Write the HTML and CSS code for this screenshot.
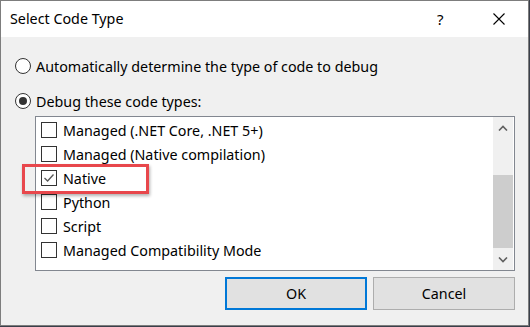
FILE: index.html
```html
<!DOCTYPE html>
<html>
<head>
<meta charset="utf-8">
<link rel="stylesheet" href="styles.css">
</head>
<body>
<div class="window">
  <div class="titlebar">
    <span class="title">Select Code Type</span>
    <span class="help">?</span>
    <span class="close">
      <svg width="12" height="12" viewBox="0 0 12 12"><path d="M0.5 0.5 L11.5 11.5 M11.5 0.5 L0.5 11.5" stroke="#000" stroke-width="1.1" fill="none"/></svg>
    </span>
  </div>
  <div class="content">
    <div class="radio-row"><span class="radio"></span><span>Automatically determine the type of code to debug</span></div>
    <div class="radio-row"><span class="radio checked"></span><span>Debug these code types:</span></div>
    <div class="listbox">
      <div class="items">
        <div class="item"><span class="cb"></span><span>Managed (.NET Core, .NET 5+)</span></div>
        <div class="item"><span class="cb"></span><span>Managed (Native compilation)</span></div>
        <div class="item"><span class="cb">
          <svg width="12" height="12" viewBox="0 0 12 12"><path d="M1.5 6 L4.6 9 L10.5 2.5" stroke="#555" stroke-width="1.3" fill="none"/></svg>
        </span><span>Native</span></div>
        <div class="item"><span class="cb"></span><span>Python</span></div>
        <div class="item"><span class="cb"></span><span>Script</span></div>
        <div class="item"><span class="cb"></span><span>Managed Compatibility Mode</span></div>
      </div>
      <div class="scrollbar">
        <div class="arrow">
          <svg width="10" height="6" viewBox="0 0 10 6"><path d="M1 5.5 L5 1.5 L9 5.5" stroke="#606060" stroke-width="1.6" fill="none"/></svg>
        </div>
        <div class="track"><div class="thumb"></div></div>
        <div class="arrow">
          <svg width="10" height="6" viewBox="0 0 10 6"><path d="M1 0.5 L5 4.5 L9 0.5" stroke="#606060" stroke-width="1.6" fill="none"/></svg>
        </div>
      </div>
    </div>
    <div class="buttons">
      <div class="btn default">OK</div>
      <div class="btn">Cancel</div>
    </div>
  </div>
  <div class="highlight"></div>
</div>
</body>
</html>
```
FILE: styles.css
```css
html, body {
  margin: 0;
  padding: 0;
  background: #3a3f4a;
}
body {
  width: 530px;
  height: 327px;
  overflow: hidden;
  font-family: "Noto Sans", "Open Sans", sans-serif;
  color: #000;
}
.window {
  position: relative;
  width: 527px;
  height: 324px;
  border: 1px solid #7d7d7d;
  background: #f0f0f0;
  display: flex;
  flex-direction: column;
}
.titlebar {
  height: 36px;
  background: #fff;
  display: flex;
  align-items: center;
  font-size: 14.3px;
}
.title {
  margin-left: 9px;
  flex: 1;
  padding-bottom: 1px;
}
.help {
  width: 12px;
  font-size: 15px;
  margin-right: 44px;
  padding-bottom: 1px;
}
.close {
  width: 12px;
  height: 12px;
  margin-right: 23px;
  display: flex;
}
.content {
  flex: 1;
  padding: 17px 13px 0 14px;
  display: flex;
  flex-direction: column;
  font-size: 14.3px;
}
.radio-row {
  height: 24px;
  display: flex;
  align-items: center;
}
.radio-row + .radio-row {
  margin-top: 11px;
}
.radio {
  width: 14px;
  height: 14px;
  border: 1px solid #333;
  border-radius: 50%;
  background: #fff;
  margin-right: 5px;
  flex: none;
  display: flex;
  align-items: center;
  justify-content: center;
}
.radio.checked::after {
  content: "";
  width: 8px;
  height: 8px;
  border-radius: 50%;
  background: #333;
}
.listbox {
  margin-top: 3px;
  margin-left: 20px;
  height: 153px;
  border: 1px solid #828790;
  background: #fff;
  display: flex;
}
.items {
  flex: 1;
  padding: 1px 0 0 5px;
}
.item {
  height: 24px;
  display: flex;
  align-items: center;
}
.cb {
  width: 14px;
  height: 14px;
  border: 1px solid #333;
  margin-right: 6px;
  flex: none;
  display: flex;
  align-items: center;
  justify-content: center;
}
.scrollbar {
  width: 20px;
  margin-right: 1px;
  background: #f0f0f0;
  display: flex;
  flex-direction: column;
}
.arrow {
  height: 21px;
  display: flex;
  align-items: center;
  justify-content: center;
}
.track {
  flex: 1;
  padding-top: 37px;
  padding-bottom: 1px;
  display: flex;
  flex-direction: column;
}
.thumb {
  flex: 1;
  background: #cdcdcd;
}
.buttons {
  margin-top: 6px;
  display: flex;
  justify-content: flex-end;
  gap: 6px;
}
.btn {
  box-sizing: border-box;
  width: 142px;
  height: 33px;
  background: #e1e1e1;
  border: 1px solid #adadad;
  display: flex;
  align-items: center;
  justify-content: center;
  font-size: 14.3px;
}
.btn.default {
  border: 2px solid #0078d7;
}
.highlight {
  position: absolute;
  left: 21px;
  top: 163px;
  width: 121px;
  height: 24px;
  border: 3px solid #e8474c;
  box-shadow: 1px 2px 3px rgba(0, 0, 0, 0.3);
}
```
